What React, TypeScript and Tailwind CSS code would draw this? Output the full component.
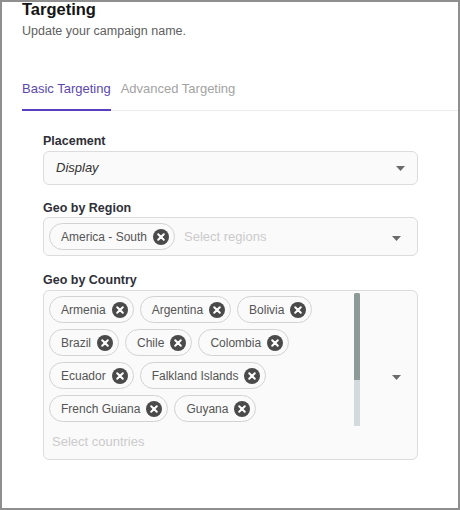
import React from 'react';

const font = { fontFamily: '"Liberation Sans", Arial, sans-serif' };

function RemoveIcon() {
  return (
    <svg width="16" height="16" viewBox="0 0 16 16" className="shrink-0">
      <circle cx="8" cy="8" r="8" fill="#4a4a4a" />
      <path d="M5.2 5.2 L10.8 10.8 M10.8 5.2 L5.2 10.8" stroke="#fff" strokeWidth="2" strokeLinecap="round" />
    </svg>
  );
}

function Caret() {
  return (
    <svg width="9" height="5" viewBox="0 0 9 5" className="shrink-0">
      <path d="M0 0 L9 0 L4.5 5 Z" fill="#6b6b6b" />
    </svg>
  );
}

function Chip({ label }: { label: string }) {
  return (
    <div className="flex h-[27px] items-center gap-[6px] rounded-full border border-[#d2d2d2] pl-[11px] pr-[5px] text-[12px] text-[#555]">
      <span>{label}</span>
      <RemoveIcon />
    </div>
  );
}

const countries = [
  'Armenia',
  'Argentina',
  'Bolivia',
  'Brazil',
  'Chile',
  'Colombia',
  'Ecuador',
  'Falkland Islands',
  'French Guiana',
  'Guyana',
];

export default function App() {
  return (
    <div className="h-[510px] w-[460px] overflow-hidden border-2 border-[#8f8f8f] bg-white" style={font}>
      <div className="pl-[20px]">
        <h2 className="-mt-[3px] text-[16.5px] font-bold leading-[20px] text-[#151515]">Targeting</h2>
        <p className="mt-[3px] text-[12.5px] leading-[18px] text-[#606060]">Update your campaign name.</p>

        <div className="mt-[30px] flex gap-[10px] border-b border-[#ececec]">
          <button className="-mb-px border-b-2 border-[#5a3ec2] pb-[11px] pt-[10px] text-[13px] leading-[18px] text-[#5b48ad]">
            Basic Targeting
          </button>
          <button className="-mb-px border-b-2 border-transparent pb-[11px] pt-[10px] text-[13px] leading-[18px] text-[#a3a3a3]">
            Advanced Targeting
          </button>
        </div>

        <div className="ml-[21px] w-[375px] pt-[22px]">
          <label className="block text-[12.5px] font-bold leading-[16px] text-[#2f2f38]">Placement</label>
          <div className="mt-[2px] flex h-[34px] items-center justify-between rounded-[6px] border border-[#dcdcdc] bg-[#fafafa] pl-[12px] pr-[12px]">
            <span className="text-[13px] italic text-[#333]">Display</span>
            <Caret />
          </div>

          <label className="mt-[15px] block text-[12.5px] font-bold leading-[16px] text-[#2f2f38]">Geo by Region</label>
          <div className="mt-px flex items-center rounded-[6px] border border-[#dcdcdc] bg-[#fafafa] py-[5px] pl-[5px] pr-[16px]">
            <Chip label="America - South" />
            <span className="ml-[9px] flex-1 text-[13px] text-[#cbcbcb]">Select regions</span>
            <div className="pt-[4px]">
              <Caret />
            </div>
          </div>

          <label className="mt-[16px] block text-[12.5px] font-bold leading-[16px] text-[#2f2f38]">Geo by Country</label>
          <div className="mt-[2px] flex rounded-[6px] border border-[#dcdcdc] bg-[#fafafa] pl-[5px]">
            <div className="flex flex-col">
              <div className="mt-[2px] flex h-[133px]">
                <div className="flex w-[300px] flex-wrap content-start gap-[6px] overflow-hidden pt-[3px]">
                  {countries.map((c) => (
                    <Chip key={c} label={c} />
                  ))}
                </div>
                <div className="ml-[5px] flex w-[6px] flex-col bg-[#d3dadd]">
                  <div className="h-[87px] rounded-t-[2px] bg-[#8d9a97]" />
                </div>
              </div>
              <div className="mt-[7px] pb-[8px] pl-[3px] text-[13px] leading-[18px] text-[#cbcbcb]">Select countries</div>
            </div>
            <div className="flex flex-1 items-center justify-end pr-[16px] pt-[4px]">
              <Caret />
            </div>
          </div>
        </div>
      </div>
    </div>
  );
}
